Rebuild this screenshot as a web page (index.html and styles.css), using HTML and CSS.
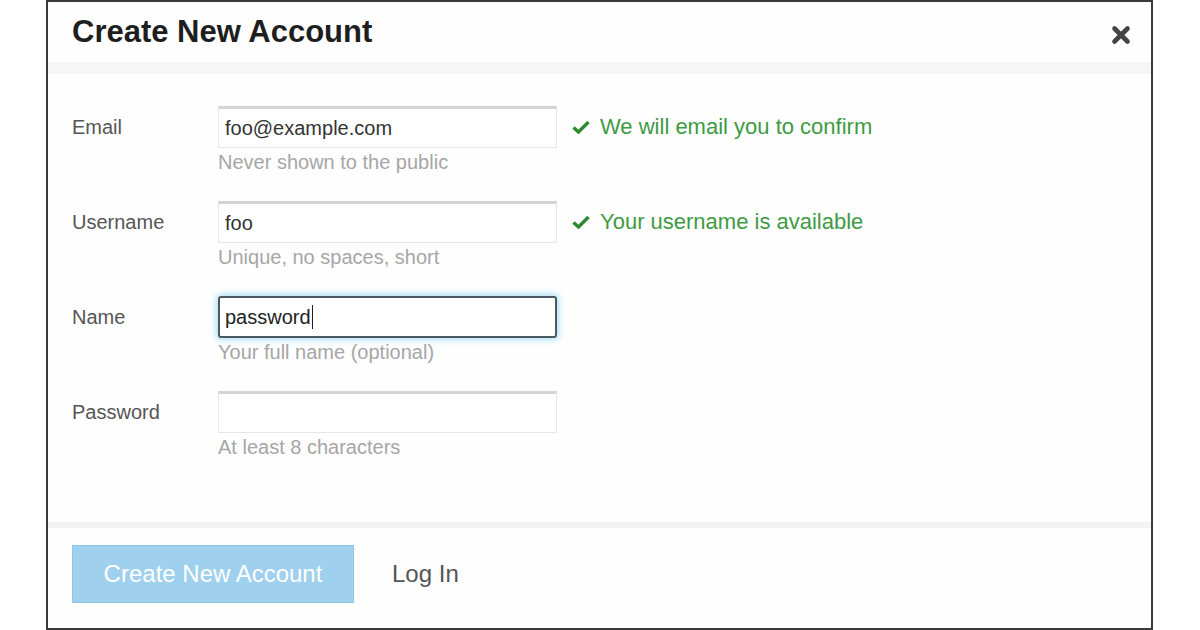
FILE: index.html
```html
<!DOCTYPE html>
<html lang="en">
<head>
<meta charset="utf-8">
<title>Create New Account</title>
<link rel="stylesheet" href="styles.css">
</head>
<body>
<div class="modal">
  <header class="modal-header">
    <h1 class="modal-title">Create New Account</h1>
    <span class="close" aria-label="Close">
      <svg width="20" height="20" viewBox="0 0 20 20"><path d="M3.5 3.5 L16.5 16.5 M16.5 3.5 L3.5 16.5" stroke="#444444" stroke-width="4.6" stroke-linecap="round"/></svg>
    </span>
  </header>
  <div class="modal-body">
    <div class="row">
      <label class="label">Email</label>
      <div class="control">
        <div class="input">foo@example.com</div>
        <div class="help">Never shown to the public</div>
      </div>
      <div class="valid">
        <svg class="check" width="18" height="14" viewBox="0 0 18 14"><path d="M1.5 7.5 L6.5 12 L16.5 2" fill="none" stroke="#2f8a2f" stroke-width="3.4"/></svg>
        <span>We will email you to confirm</span>
      </div>
    </div>
    <div class="row">
      <label class="label">Username</label>
      <div class="control">
        <div class="input">foo</div>
        <div class="help">Unique, no spaces, short</div>
      </div>
      <div class="valid">
        <svg class="check" width="18" height="14" viewBox="0 0 18 14"><path d="M1.5 7.5 L6.5 12 L16.5 2" fill="none" stroke="#2f8a2f" stroke-width="3.4"/></svg>
        <span>Your username is available</span>
      </div>
    </div>
    <div class="row">
      <label class="label">Name</label>
      <div class="control">
        <div class="input focused">password<span class="caret"></span></div>
        <div class="help">Your full name (optional)</div>
      </div>
    </div>
    <div class="row">
      <label class="label">Password</label>
      <div class="control">
        <div class="input"></div>
        <div class="help">At least 8 characters</div>
      </div>
    </div>
  </div>
  <footer class="modal-footer">
    <button class="btn-primary" disabled>Create New Account</button>
    <a class="login" href="#">Log In</a>
  </footer>
</div>
</body>
</html>
```
FILE: styles.css
```css
html, body {
  margin: 0;
  padding: 0;
  background: #ffffff;
}
body {
  font-family: "Liberation Sans", Arial, sans-serif;
  width: 1200px;
  height: 630px;
  overflow: hidden;
}
.modal {
  margin-left: 46px;
  width: 1107px;
  height: 630px;
  box-sizing: border-box;
  border: 2px solid #3a3a3a;
  background: #fefefe;
  display: flex;
  flex-direction: column;
}
.modal-header {
  height: 60px;
  flex: none;
  display: flex;
  align-items: center;
  justify-content: space-between;
  padding: 0 20px 0 24px;
  border-bottom: 12px solid #f6f6f6;
}
.modal-title {
  margin: 0;
  font-size: 31px;
  font-weight: bold;
  color: #1e1e1e;
  letter-spacing: 0;
}
.close {
  display: flex;
  width: 20px;
  height: 20px;
  margin-top: 6px;
}
.modal-body {
  flex: 1;
  padding: 32px 24px 0 24px;
  display: flex;
  flex-direction: column;
  gap: 28px;
}
.row {
  display: grid;
  grid-template-columns: 131px 339px auto;
  column-gap: 15px;
  align-items: start;
}
.label {
  font-size: 20px;
  line-height: 42px;
  color: #555555;
}
.control {
  display: flex;
  flex-direction: column;
}
.input {
  box-sizing: border-box;
  height: 42px;
  border: 1px solid #e6e6e6;
  border-top: 3px solid #d4d4d4;
  background: #ffffff;
  padding: 0 6px;
  font-size: 20px;
  line-height: 38px;
  color: #333333;
}
.input.focused {
  border: 2px solid #4b5963;
  border-radius: 3px;
  line-height: 38px;
  padding-left: 5px;
  box-shadow: 0 0 6px 2px rgba(110, 200, 235, 0.55);
  color: #222;
}
.caret {
  display: inline-block;
  width: 1px;
  height: 24px;
  background: #222;
  vertical-align: -5px;
  margin-left: 1px;
}
.help {
  margin-top: 3px;
  font-size: 20px;
  line-height: 22px;
  color: #a6a6a6;
}
.valid {
  display: flex;
  align-items: center;
  gap: 10px;
  height: 42px;
  font-size: 22px;
  color: #3f9a44;
}
.check {
  flex: none;
}
.modal-footer {
  flex: none;
  height: 106px;
  box-sizing: border-box;
  border-top: 6px solid #f3f3f3;
  padding: 17px 24px 0 24px;
  display: flex;
  align-items: flex-start;
  gap: 38px;
}
.btn-primary {
  width: 282px;
  height: 58px;
  border: 1px solid #8fc4e4;
  background: #9fd0ee;
  color: #ffffff;
  font-family: "Liberation Sans", Arial, sans-serif;
  font-size: 24px;
  padding: 0;
  margin: 0;
}
.login {
  font-size: 24px;
  line-height: 58px;
  color: #555555;
  text-decoration: none;
}
```
